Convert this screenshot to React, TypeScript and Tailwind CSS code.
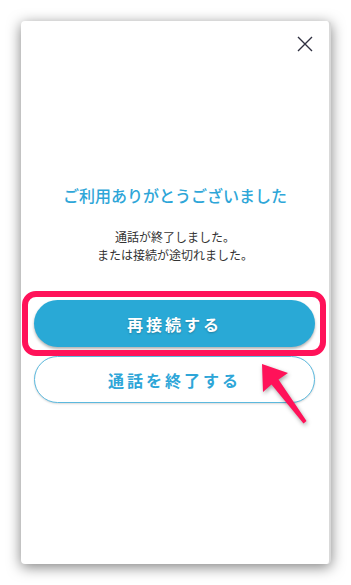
import React from "react";

const font = { fontFamily: '"Noto Sans CJK JP", "Noto Sans", sans-serif' };

function CloseIcon() {
    return (
        <svg width="16" height="16" viewBox="0 0 16 16" fill="none">
            <path d="M1 1L15 15M15 1L1 15" stroke="#2f3040" strokeWidth="1.4" />
        </svg>
    );
}

export default function App() {
    return (
        <div className="relative w-[351px] h-[585px] bg-white overflow-hidden" style={font}>
            <div className="pt-[21px] pl-[21px]">
                {/* dialog card */}
                <div className="relative w-[310px] h-[543px] bg-white rounded-[4px] border-r-2 border-[#d9d9d9] shadow-[0_3px_14px_rgba(0,0,0,0.5)] flex flex-col">
                    <div className="flex justify-end pt-[15px] pr-[16px]">
                        <button className="w-[16px] h-[16px]">
                            <CloseIcon />
                        </button>
                    </div>
                    <h2 className="mt-[131px] text-center text-[16px] leading-[24px] font-medium text-[#2ea6d8]">
                        ご利用ありがとうございました
                    </h2>
                    <p className="mt-[21px] text-center text-[12px] leading-[18px] text-[#333]">
                        通話が終了しました。
                        <br />
                        または接続が途切れました。
                    </p>
                    <div className="mt-[36px] flex flex-col gap-[9px] pl-[13px]">
                        <button className="w-[281px] h-[47px] rounded-full bg-[#29a9d6] text-white text-[16px] font-bold tracking-[3px] shadow-[0_2px_3px_rgba(0,0,0,0.3)] [text-shadow:0_1px_2px_rgba(0,0,0,0.25)]">
                            再接続する
                        </button>
                        <button className="w-[281px] h-[47px] rounded-full bg-white border border-[#5bb9de] text-[#2ea6d8] text-[16px] font-bold tracking-[3px] shadow-[0_1px_2px_rgba(0,0,0,0.15)]">
                            通話を終了する
                        </button>
                    </div>
                </div>
            </div>

            {/* annotation highlight */}
            <div className="absolute left-[22px] top-[291px] w-[304px] h-[65px] rounded-[14px] border-[6px] border-[#ff1259]" />

            {/* annotation arrow */}
            <svg className="absolute left-0 top-0 drop-shadow-[1px_2px_2px_rgba(0,0,0,0.35)]" width="351" height="585" viewBox="0 0 351 585">
                <polygon
                    points="262,364 288,373 278.5,379.5 306.5,421 303.5,423.5 271.5,384.5 263,392"
                    fill="#ff1259"
                />
            </svg>
        </div>
    );
}
